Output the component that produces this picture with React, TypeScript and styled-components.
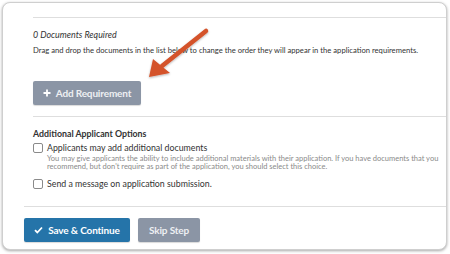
import React from "react";
import styled, { createGlobalStyle } from "styled-components";

const Global = createGlobalStyle`
  html, body { margin: 0; padding: 0; background: #fff; }
  body { font-family: Lato, "Open Sans", sans-serif; color: #333; width: 450px; height: 254px; overflow: hidden; }
  * { box-sizing: border-box; }
`;

const Card = styled.div`
  position: relative;
  margin: 2px 3px 0 2px;
  height: 248px;
  border: 1px solid #cfcfcf;
  border-radius: 8px;
  box-shadow: 0 1px 3px rgba(0, 0, 0, 0.35);
  padding-left: 21px;
  overflow: hidden;
  background: #fff;
`;

const Section = styled.div<{ $top?: number; $bottom?: number; $border?: boolean }>`
  margin-left: 9px;
  margin-top: ${(p) => p.$top ?? 0}px;
  padding-top: 11px;
  padding-bottom: ${(p) => p.$bottom ?? 0}px;
  border-top: ${(p) => (p.$border ? "1px solid #dedede" : "none")};
`;

const Title = styled.div`
  font-size: 8.9px;
  line-height: 12px;
  font-style: italic;
  color: #333;
`;

const Text = styled.div`
  margin-top: 3px;
  font-size: 7.65px;
  line-height: 12px;
  color: #333;
  white-space: nowrap;
`;

const Button = styled.button<{ $variant: "primary" | "muted"; $w: number }>`
  display: inline-flex;
  align-items: center;
  justify-content: center;
  gap: 5px;
  width: ${(p) => p.$w}px;
  height: 24px;
  padding: 0;
  border: none;
  border-radius: 2px;
  font-family: Lato, sans-serif;
  font-weight: 700;
  font-size: 10px;
  letter-spacing: -0.15px;
  color: ${(p) => (p.$variant === "primary" ? "#fff" : "#eef0f3")};
  background: ${(p) => (p.$variant === "primary" ? "#2574a9" : "#8b95a5")};
  box-shadow: 0 1px 1px rgba(0, 0, 0, 0.15);
`;

const AddButton = styled(Button)`
  margin-top: 25px;
`;

const Heading = styled.div`
  font-size: 8.8px;
  line-height: 12px;
  font-weight: 700;
  color: #333;
`;

const CheckRow = styled.label<{ $top: number }>`
  display: flex;
  align-items: center;
  gap: 4px;
  margin-top: ${(p) => p.$top}px;
  font-size: 8.8px;
  line-height: 12px;
  color: #333;
`;

const Box = styled.span`
  width: 10px;
  height: 10px;
  border: 1px solid #8a8a8a;
  border-radius: 2px;
  background: #fff;
  flex: none;
`;

const Help = styled.div`
  margin-top: 1px;
  margin-left: 14px;
  font-size: 7.5px;
  line-height: 8px;
  color: #8a8a8a;
  white-space: nowrap;
`;

const Footer = styled.div`
  margin-top: 16px;
  border-top: 1px solid #dedede;
  padding-top: 11px;
  display: flex;
  gap: 8px;
`;

const Arrow = styled.svg`
  position: absolute;
  left: 0;
  top: 0;
  pointer-events: none;
`;

export default function App() {
  return (
    <>
      <Global />
      <Card>
        <Section $top={14} $bottom={11} $border>
          <Title>0 Documents Required</Title>
          <Text>
            Drag and drop the documents in the list below to change the order they will appear in the application requirements.
          </Text>
          <AddButton $variant="muted" $w={108}>
            <svg width="8" height="8" viewBox="0 0 8 8">
              <path d="M4 0.5v7M0.5 4h7" stroke="#fff" strokeWidth="1.8" />
            </svg>
            Add Requirement
          </AddButton>
        </Section>
        <Section $border>
          <Heading>Additional Applicant Options</Heading>
          <CheckRow $top={2}>
            <Box />
            Applicants may add additional documents
          </CheckRow>
          <Help>
            You may give applicants the ability to include additional materials with their application. If you have documents that you
            <br />
            recommend, but don't require as part of the application, you should select this choice.
          </Help>
          <CheckRow $top={7}>
            <Box />
            Send a message on application submission.
          </CheckRow>
        </Section>
        <Footer>
          <Button $variant="primary" $w={106}>
            <svg width="9" height="8" viewBox="0 0 9 8">
              <path d="M1 4.2l2.3 2.3L8 1.5" stroke="#fff" strokeWidth="1.8" fill="none" />
            </svg>
            Save &amp; Continue
          </Button>
          <Button $variant="muted" $w={62}>
            Skip Step
          </Button>
        </Footer>
        <Arrow width="446" height="248" viewBox="0 0 446 248">
          <defs>
            <filter id="sh" x="-20%" y="-20%" width="140%" height="140%">
              <feDropShadow dx="0" dy="1" stdDeviation="1" floodColor="#000" floodOpacity="0.3" />
            </filter>
          </defs>
          <g filter="url(#sh)" transform="translate(-3,-3)">
            <path d="M206 31 L162 66" stroke="#d4522a" strokeWidth="4.5" strokeLinecap="round" />
            <path d="M149 77 L153 59 L170 73 Z" fill="#d4522a" />
          </g>
        </Arrow>
      </Card>
    </>
  );
}
